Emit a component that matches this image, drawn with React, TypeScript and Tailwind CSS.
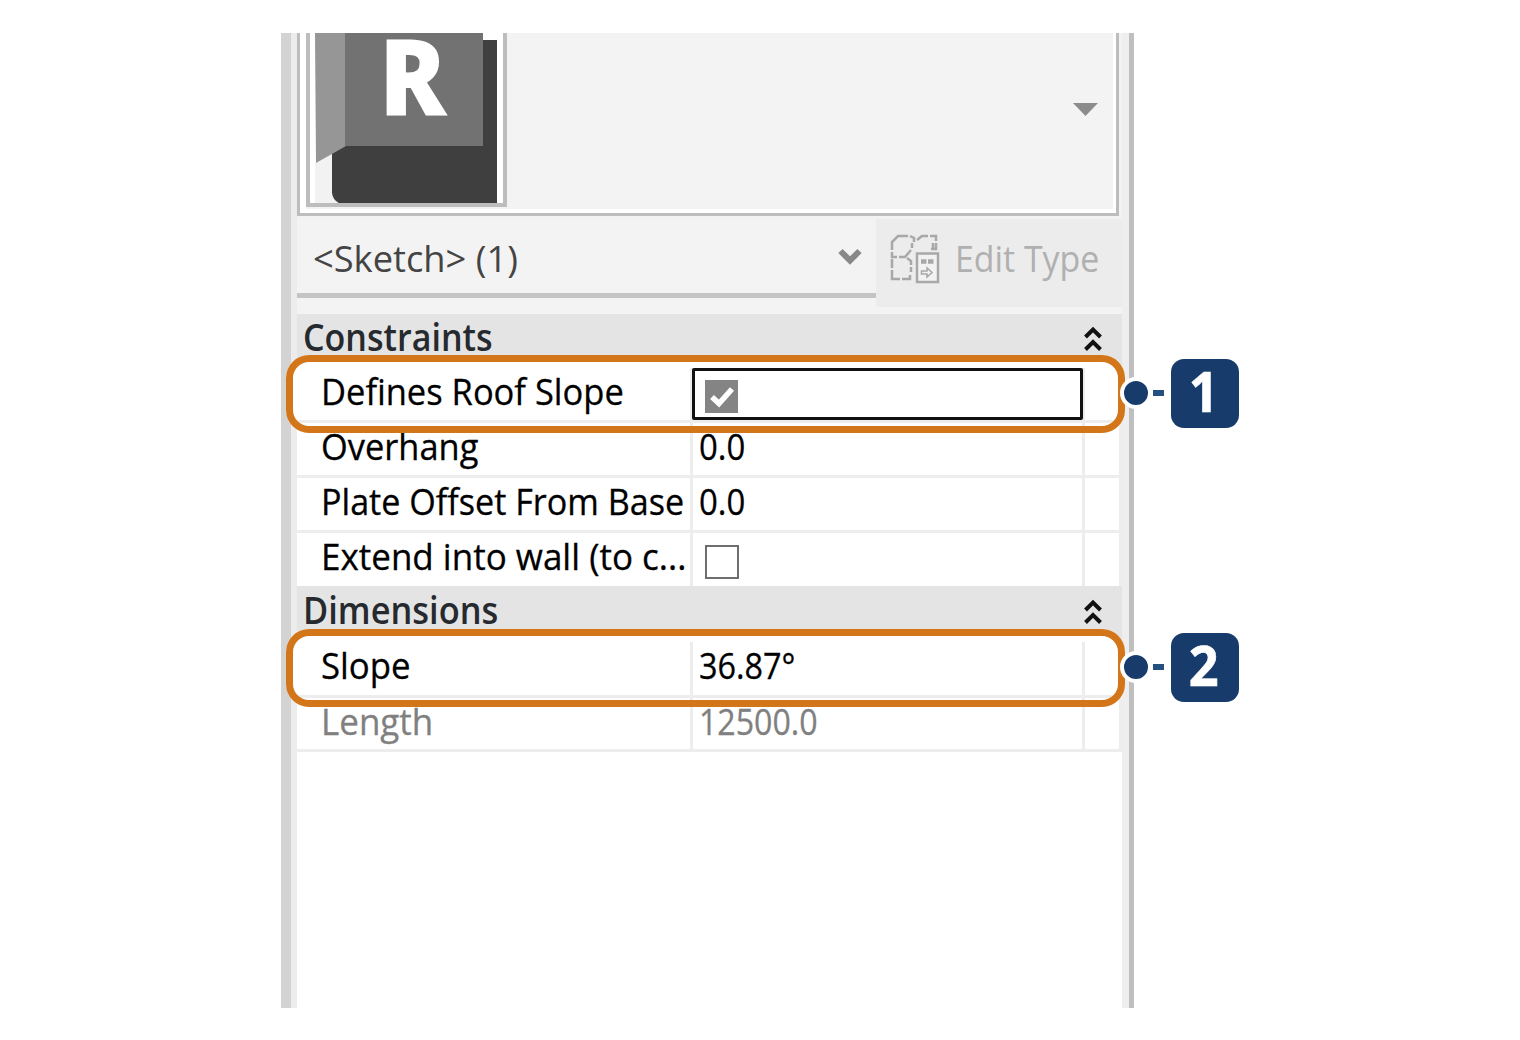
import React from 'react';

interface RowProps {
  label: string;
  labelClass: string;
  height: string;
  step?: string;
  muted?: boolean;
  noLine?: boolean;
  children: React.ReactNode;
}

const Callout: React.FC<{ step: string }> = ({ step }) => (
  <>
    <div className="absolute -left-[11px] -top-[13px] h-[78px] w-[839px] rounded-[23px] bg-white" />
    <div className="absolute -left-[11px] -top-[13px] z-10 h-[78px] w-[839px] rounded-[23px] border-[7px] border-[#d37519]" />
    <div className="absolute left-[823px] top-[9px] z-10 size-[32px] rounded-full border-[4px] border-white bg-[#173c6b]" />
    <div className="absolute left-[856px] top-[22px] z-10 h-[6px] w-[11px] bg-[#23507f]" />
    <div className="absolute left-[874px] -top-[9px] z-10 flex h-[69px] w-[68px] items-center justify-center rounded-[13px] bg-[#173c6b]">
      <span className="-mt-[7px] -ml-[2px] scale-x-[0.95] text-[55px] leading-[69px] font-bold text-white [-webkit-text-stroke:0.6px]">{step}</span>
    </div>
  </>
);

const Row: React.FC<RowProps> = ({ label, labelClass, height, step, muted, noLine, children }) => (
  <div className={`relative ${height} ${muted ? 'text-[#808080]' : 'text-black'}`}>
    {step && <Callout step={step} />}
    <div className={`relative flex h-full border-[#ededed] ${step ? 'w-[821px]' : 'w-[825px] border-r-[3px]'} ${noLine ? '' : 'border-b-[3px]'}`}>
      <div className="w-[393px] shrink-0 pl-[24px]">
        <span className={`block w-max origin-left text-[37px] leading-[46px] whitespace-nowrap [-webkit-text-stroke:0.3px] ${labelClass}`}>{label}</span>
      </div>
      <div className="w-[395px] shrink-0 border-x-[3px] border-[#ededed] pl-[6px]">{children}</div>
    </div>
  </div>
);

const Value: React.FC<{ text: string; className: string }> = ({ text, className }) => (
  <span className={`block w-max origin-left text-[37px] leading-[46px] [-webkit-text-stroke:0.3px] ${className}`}>{text}</span>
);

const GroupHeader: React.FC<{ title: string; className: string; titleClass: string }> = ({ title, className, titleClass }) => (
  <div className={`flex justify-between border-[#f0f0f0] bg-[#e4e4e4] pr-[20px] pl-[6px] ${className}`}>
    <span className={`block w-max origin-left text-[37px] leading-[46px] font-semibold text-[#262a2e] ${titleClass}`}>{title}</span>
    <svg className="mt-[12px]" width="18" height="26" viewBox="0 0 18 26" fill="none" stroke="#111" strokeWidth="4">
      <path d="M1.5 11 L9 3.5 L16.5 11 M1.5 23.5 L9 16 L16.5 23.5" />
    </svg>
  </div>
);

const Thumbnail = () => (
  <div className="relative h-[174px] w-[201px] border-x-[4px] border-b-[4px] border-[#bdbdbd] bg-white">
    <svg width="193" height="170" viewBox="310 33 193 170">
      <path d="M315 163 L332 153 V194 L341 204 H315 Z" fill="#f2f2f2" />
      <path d="M344 146 L332 153 V193 Q333 201 341 204 H497 V40 H482 V146 Z" fill="#3f3f3f" />
      <path d="M315 33 H346 V146 L316 163 Z" fill="#969696" />
      <path d="M345 33 H483 V146 H345 Z" fill="#727272" />
    </svg>
    <span className="absolute left-[69px] top-[4px] origin-left scale-x-[0.94] text-[106px] leading-[76px] font-extrabold text-white">R</span>
  </div>
);

const EditTypeIcon = () => (
  <svg width="50" height="50" viewBox="890 234 50 50" fill="none" stroke="#a8a8a8" strokeWidth="2.5">
    <path d="M892 250 V242 L898 236 H908 M910 236 L914 238 V242 M912 243 V248 M911 250 L905 257 H899 M897 257 H892 V252" />
    <path d="M892 259 V268 M892 270 V279 H900 M902 279 H910 V275 M911 272 V267 M911 265 V261 L907 258" />
    <path d="M917 240 L922 236 H928 M930 236 H936 V241 M936 243 V249 H931 M933 243 V248" />
    <path d="M917 253.5 H938 V282 H917 Z" fill="#f2f2f2" />
    <path d="M921 261.5 H926.5 M928 261.5 H933.5" strokeWidth="4.5" />
    <path d="M921.5 271 H927 V268 L932 272.5 L927 277 V274 H921.5 Z" strokeWidth="1.5" />
  </svg>
);

const App = () => {
  return (
    <div className="h-[1040px] w-[1520px] overflow-hidden bg-white pt-[33px] pl-[281px] font-['Open_Sans',sans-serif]">
      <div className="flex h-[975px] w-[853px]">
        <div className="w-[16px] shrink-0 border-l-[10px] border-[#d3d3d3] bg-[#ececec]" />
        <main className="flex w-[825px] shrink-0 flex-col">
          <section className="h-[186px] shrink-0 bg-[#f2f2f2]">
            <div className="h-[183px] w-[822px] border-x-[3px] border-b-[3px] border-[#bdbdbd] bg-white pr-[3px] pl-[6px]">
              <div className="flex h-[176px] bg-[#f3f3f3]">
                <Thumbnail />
                <svg className="mt-[70px] ml-[566px]" width="25" height="14" viewBox="0 0 25 14">
                  <path d="M0 0 H25 L12.5 13 Z" fill="#8c8c8c" />
                </svg>
              </div>
            </div>
          </section>

          <section className="flex h-[95px] shrink-0 bg-[#f3f3f3]">
            <div className="flex h-[79px] w-[579px] justify-between border-b-[5px] border-[#c4c4c4] pr-[14px] pl-[16px]">
              <span className="mt-[16px] block w-max origin-left scale-x-[0.98] text-[37px] leading-[46px] text-[#444]">&lt;Sketch&gt; (1)</span>
              <svg className="mt-[29px]" width="24" height="18" viewBox="0 0 24 18" fill="none" stroke="#888" strokeWidth="6">
                <path d="M2.5 3 L12 12.5 L21.5 3" />
              </svg>
            </div>
            <div className="flex h-[88px] w-[246px] bg-[#ececec] pt-[15px] pl-[14px]">
              <EditTypeIcon />
              <span className="mt-[1px] ml-[15px] block w-max origin-left scale-x-[0.915] text-[37px] leading-[46px] whitespace-nowrap text-[#b0b0b0]">Edit Type</span>
            </div>
          </section>

          <section className="flex-1 bg-white">
            <GroupHeader title="Constraints" className="h-[54px] border-b-[3px]" titleClass="scale-x-[0.92]" />
            <Row label="Defines Roof Slope" labelClass="scale-x-[0.932]" height="h-[55px]" step="1">
              <div className="relative -left-[7px] h-[52px] w-[391px] rounded-[2px] border-[3px] border-[#111] bg-white pt-[9px] pl-[10px]">
                <svg width="33" height="33" viewBox="0 0 33 33">
                  <path d="M0 0 H33 V33 H0 Z" fill="#848484" />
                  <path d="M7 17 L14 23.5 L27 9" fill="none" stroke="#fff" strokeWidth="5.5" />
                </svg>
              </div>
            </Row>
            <Row label="Overhang" labelClass="scale-x-[0.93]" height="h-[55px]">
              <Value text="0.0" className="scale-x-[0.89]" />
            </Row>
            <Row label="Plate Offset From Base" labelClass="scale-x-[0.922]" height="h-[55px]">
              <Value text="0.0" className="scale-x-[0.89]" />
            </Row>
            <Row label="Extend into wall (to c..." labelClass="scale-x-[0.946]" height="h-[53px]" noLine>
              <div className="mt-[12px] ml-[6px] size-[34px] border-[2px] border-[#6e6e6e] bg-white" />
            </Row>
            <GroupHeader title="Dimensions" className="h-[56px] border-b-[3px] pt-[1px]" titleClass="scale-x-[0.93]" />
            <Row label="Slope" labelClass="scale-x-[0.94]" height="h-[56px]" step="2">
              <Value text="36.87°" className="scale-x-[0.875]" />
            </Row>
            <Row label="Length" labelClass="scale-x-[0.945]" height="h-[54px]" muted>
              <Value text="12500.0" className="scale-x-[0.868]" />
            </Row>
          </section>
        </main>
        <div className="w-[12px] shrink-0 border-r-[5px] border-[#bfbfbf] bg-[#eeeeee]" />
      </div>
    </div>
  );
};

export default App;
